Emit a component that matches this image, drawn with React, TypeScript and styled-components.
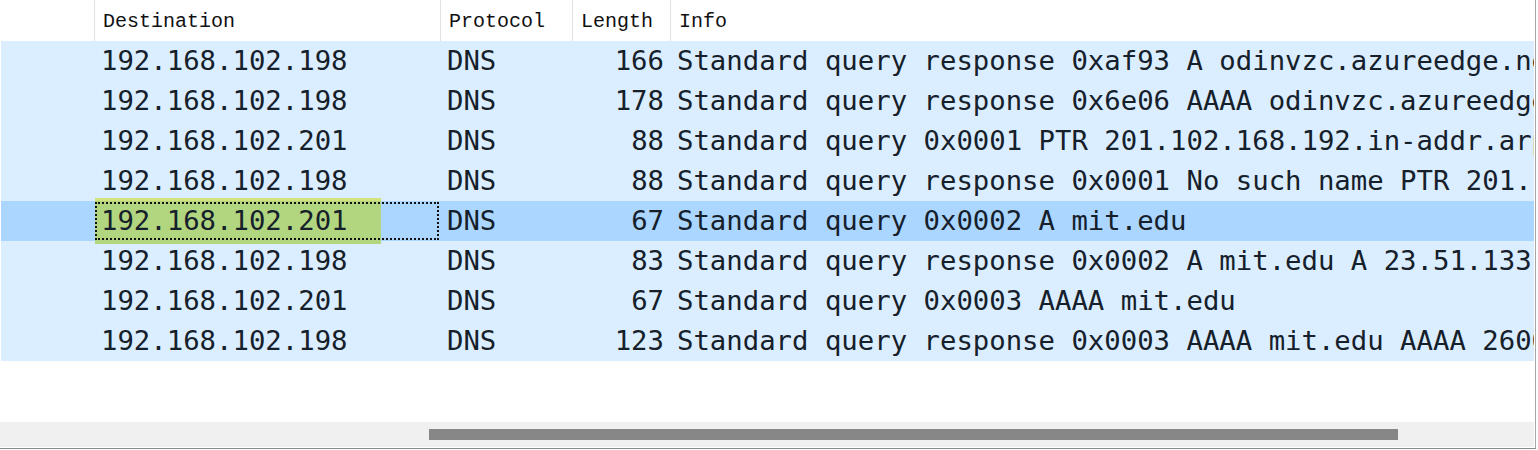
import React from "react";
import styled, { createGlobalStyle } from "styled-components";

const Global = createGlobalStyle`
  html, body { margin: 0; padding: 0; background: #ffffff; }
  body { width: 1538px; height: 450px; overflow: hidden; }
`;

const Frame = styled.div`
  width: 1535px;
  height: 448px;
  border-right: 1px solid #a6a6a6;
  border-bottom: 1px solid #8c8c8c;
  display: flex;
  flex-direction: column;
  background: #ffffff;
  overflow: hidden;
`;

const Grid = styled.div`
  display: grid;
  grid-template-columns: 93px 346px 132px 98px 1fr;
  grid-template-rows: 41px;
  grid-auto-rows: 40px;
  margin-left: 1px;
  margin-right: 1px;
`;

const HeaderCell = styled.div<{ $sep?: boolean }>`
  height: 41px;
  box-sizing: border-box;
  border-left: ${(p) => (p.$sep ? "1px solid #e2e2e2" : "none")};
  padding-left: 8px;
  font-family: "Liberation Mono", "DejaVu Sans Mono", monospace;
  font-size: 20px;
  line-height: 44px;
  color: #111111;
  white-space: nowrap;
  overflow: hidden;
`;

const Row = styled.div<{ $selected?: boolean }>`
  display: contents;
  --row-bg: ${(p) => (p.$selected ? "#abd6ff" : "#daeeff")};
`;

const Cell = styled.div<{ $align?: "left" | "right"; $focus?: boolean }>`
  position: relative;
  height: 40px;
  box-sizing: border-box;
  background: var(--row-bg);
  padding: ${(p) => (p.$align === "right" ? "0 6px 0 0" : "0 0 0 7px")};
  text-align: ${(p) => p.$align ?? "left"};
  font-family: "DejaVu Sans Mono", "Liberation Mono", monospace;
  font-size: 27.3px;
  line-height: 39px;
  color: #15202b;
  white-space: nowrap;
  overflow: hidden;
  outline: ${(p) => (p.$focus ? "2px dotted #111" : "none")};
  outline-offset: -2px;
`;

const Highlight = styled.span`
  display: inline-block;
  width: 280px;
  height: 43px;
  margin-left: -6px;
  padding-left: 6px;
  margin-top: -3px;
  box-sizing: content-box;
  border-top: 3px solid #d3e27a;
  background: #b2d67f;
  line-height: 39px;
  vertical-align: top;
`;

const FocusCell = styled(Cell)`
  overflow: visible;
  z-index: 1;
  outline-offset: -3px;
`;

const Spacer = styled.div`
  flex: 1;
`;

const ScrollTrack = styled.div`
  height: 25px;
  margin-right: 1px;
  background: #f0f0f0;
  display: flex;
  align-items: flex-start;
  padding-top: 7px;
  box-sizing: border-box;
  margin-bottom: 1px;
`;

const Thumb = styled.div`
  height: 11px;
  background: #878787;
`;

type Pkt = { dst: string; proto: string; len: number; info: string };

const rows: Pkt[] = [
  { dst: "192.168.102.198", proto: "DNS", len: 166, info: "Standard query response 0xaf93 A odinvzc.azureedge.net" },
  { dst: "192.168.102.198", proto: "DNS", len: 178, info: "Standard query response 0x6e06 AAAA odinvzc.azureedge.net" },
  { dst: "192.168.102.201", proto: "DNS", len: 88, info: "Standard query 0x0001 PTR 201.102.168.192.in-addr.arpa" },
  { dst: "192.168.102.198", proto: "DNS", len: 88, info: "Standard query response 0x0001 No such name PTR 201.102.168.192" },
  { dst: "192.168.102.201", proto: "DNS", len: 67, info: "Standard query 0x0002 A mit.edu" },
  { dst: "192.168.102.198", proto: "DNS", len: 83, info: "Standard query response 0x0002 A mit.edu A 23.51.133.170" },
  { dst: "192.168.102.201", proto: "DNS", len: 67, info: "Standard query 0x0003 AAAA mit.edu" },
  { dst: "192.168.102.198", proto: "DNS", len: 123, info: "Standard query response 0x0003 AAAA mit.edu AAAA 2600:1406" },
];

export default function App() {
  return (
    <>
      <Global />
      <Frame>
        <Grid>
          <HeaderCell />
          <HeaderCell $sep>Destination</HeaderCell>
          <HeaderCell $sep>Protocol</HeaderCell>
          <HeaderCell $sep>Length</HeaderCell>
          <HeaderCell $sep>Info</HeaderCell>
          {rows.map((r, i) => {
            const sel = i === 4;
            return (
              <Row key={i} $selected={sel}>
                <Cell />
                {sel ? (
                  <FocusCell $focus>
                    <Highlight>{r.dst}</Highlight>
                  </FocusCell>
                ) : (
                  <Cell>{r.dst}</Cell>
                )}
                <Cell>{r.proto}</Cell>
                <Cell $align="right">{r.len}</Cell>
                <Cell>{r.info}</Cell>
              </Row>
            );
          })}
        </Grid>
        <Spacer />
        <ScrollTrack>
          <Thumb style={{ marginLeft: 429, width: 969 }} />
        </ScrollTrack>
      </Frame>
    </>
  );
}
